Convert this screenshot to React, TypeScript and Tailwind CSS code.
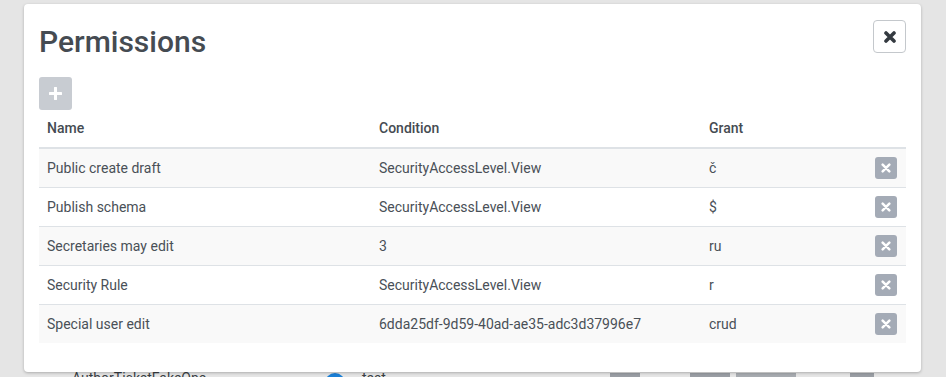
import React from "react";

type Permission = {
    name: string;
    condition: string;
    grant: string;
};

const permissions: Permission[] = [
    { name: "Public create draft", condition: "SecurityAccessLevel.View", grant: "č" },
    { name: "Publish schema", condition: "SecurityAccessLevel.View", grant: "$" },
    { name: "Secretaries may edit", condition: "3", grant: "ru" },
    { name: "Security Rule", condition: "SecurityAccessLevel.View", grant: "r" },
    {
        name: "Special user edit",
        condition: "6dda25df-9d59-40ad-ae35-adc3d37996e7",
        grant: "crud",
    },
];

function TimesIcon({ size, color, width }: { size: number; color: string; width: number }) {
    return (
        <svg width={size} height={size} viewBox="0 0 12 12" fill="none">
            <path
                d="M2 2 L10 10 M10 2 L2 10"
                stroke={color}
                strokeWidth={width}
                strokeLinecap="round"
            />
        </svg>
    );
}

function PlusIcon() {
    return (
        <svg width="13" height="13" viewBox="0 0 12 12" fill="none">
            <path d="M6 1 V11 M1 6 H11" stroke="#ffffff" strokeWidth="2.8" strokeLinecap="round" />
        </svg>
    );
}

export default function App() {
    return (
        <div
            className="relative w-[946px] h-[377px] overflow-hidden bg-[#e5e5e5] text-[#495057]"
            style={{ fontFamily: "Roboto, 'Liberation Sans', sans-serif" }}
        >
            {/* page underneath the modal */}
            <div className="flex items-start pt-[368px] text-[14px] leading-[20px] text-[#3a3f44]">
                <span className="ml-[72px] w-[253px]">AuthorTicketFakeOne</span>
                <span className="mt-[5px] w-[20px] h-[20px] rounded-full bg-[#1b7fd6]" />
                <span className="ml-[17px] w-[248px]">test</span>
                <span className="mt-[5px] w-[30px] h-[12px] bg-[#9a9ea4]" />
                <span className="ml-[50px] mt-[5px] w-[40px] h-[12px] bg-[#9a9ea4]" />
                <span className="ml-[6px] mt-[5px] w-[60px] h-[12px] bg-[#a7abb0]" />
                <span className="ml-[54px] mt-[5px] w-[24px] h-[12px] bg-[#9a9ea4]" />
            </div>

            {/* modal */}
            <div className="absolute top-[4px] left-[24px] w-[897px] h-[368px] bg-white rounded-[4px] shadow-[0_1px_3px_rgba(0,0,0,0.25)] px-[15px] pt-[21px]">
                <div className="flex items-start justify-between">
                    <h1 className="text-[30px] leading-[34px] font-medium text-[#454b52]">
                        Permissions
                    </h1>
                    <button className="-mt-[5px] w-[33px] h-[33px] flex items-center justify-center border border-[#c4c8cc] rounded-[4px] bg-white">
                        <TimesIcon size={12} color="#343a40" width={3.6} />
                    </button>
                </div>

                <button className="mt-[18px] w-[33px] h-[33px] flex items-center justify-center rounded-[3px] bg-[#c8ccd2]">
                    <PlusIcon />
                </button>

                <div className="text-[14px] leading-[21px]">
                    <div className="flex items-center h-[39px] border-b-2 border-[#dee2e6] font-medium text-[#454b52]">
                        <div className="w-[332px] pl-[8px]">Name</div>
                        <div className="w-[330px] pl-[8px]">Condition</div>
                        <div className="flex-1 pl-[8px]">Grant</div>
                    </div>
                    {permissions.map((p, i) => (
                        <div
                            key={p.name}
                            className={`flex items-center ${i === 0 ? "h-[38px]" : "h-[39px] border-t border-[#dee2e6]"} ${i % 2 === 0 ? "bg-[#f9f9f9]" : "bg-white"}`}
                        >
                            <div className="w-[332px] pl-[8px]">{p.name}</div>
                            <div className="w-[330px] pl-[8px]">{p.condition}</div>
                            <div className="flex-1 pl-[8px]">{p.grant}</div>
                            <div className="pr-[9px]">
                                <button className="w-[22px] h-[22px] flex items-center justify-center rounded-[3px] bg-[#a4abb6]">
                                    <TimesIcon size={10} color="#ffffff" width={3} />
                                </button>
                            </div>
                        </div>
                    ))}
                </div>
            </div>
        </div>
    );
}
